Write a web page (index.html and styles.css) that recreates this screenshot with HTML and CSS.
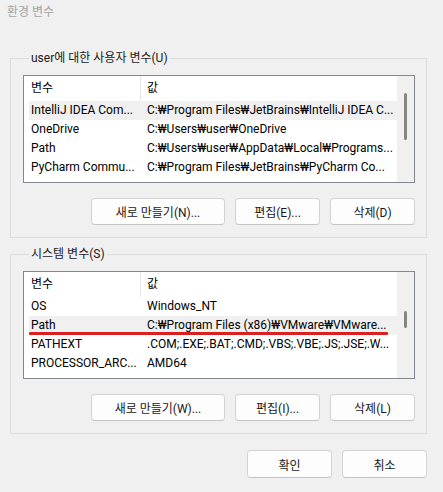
FILE: index.html
```html
<!DOCTYPE html>
<html lang="ko">
<head>
<meta charset="utf-8">
<title>환경 변수</title>
<link rel="stylesheet" href="styles.css">
</head>
<body>
<div class="title">환경 변수</div>

<fieldset class="group">
  <legend>user에 대한 사용자 변수(U)</legend>
  <div class="list">
    <div class="list-body">
      <div class="list-header">
        <span class="col name">변수</span>
        <span class="col value">값</span>
      </div>
      <div class="row selected">
        <span class="col name">IntelliJ IDEA Com...</span>
        <span class="col value">C:₩Program Files₩JetBrains₩IntelliJ IDEA C...</span>
      </div>
      <div class="row">
        <span class="col name">OneDrive</span>
        <span class="col value">C:₩Users₩user₩OneDrive</span>
      </div>
      <div class="row">
        <span class="col name">Path</span>
        <span class="col value">C:₩Users₩user₩AppData₩Local₩Programs...</span>
      </div>
      <div class="row">
        <span class="col name">PyCharm Commu...</span>
        <span class="col value">C:₩Program Files₩JetBrains₩PyCharm Co...</span>
      </div>
    </div>
    <div class="scrollbar"><div class="thumb thumb-user"></div></div>
  </div>
  <div class="buttons">
    <button class="btn wide">새로 만들기(N)...</button>
    <button class="btn">편집(E)...</button>
    <button class="btn">삭제(D)</button>
  </div>
</fieldset>

<fieldset class="group group-system">
  <legend>시스템 변수(S)</legend>
  <div class="list">
    <div class="list-body">
      <div class="list-header">
        <span class="col name">변수</span>
        <span class="col value">값</span>
      </div>
      <div class="row">
        <span class="col name">OS</span>
        <span class="col value">Windows_NT</span>
      </div>
      <div class="row selected marked">
        <span class="col name">Path</span>
        <span class="col value">C:₩Program Files (x86)₩VMware₩VMware...</span>
        <span class="mark"></span>
      </div>
      <div class="row">
        <span class="col name">PATHEXT</span>
        <span class="col value">.COM;.EXE;.BAT;.CMD;.VBS;.VBE;.JS;.JSE;.W...</span>
      </div>
      <div class="row">
        <span class="col name">PROCESSOR_ARC...</span>
        <span class="col value">AMD64</span>
      </div>
    </div>
    <div class="scrollbar"><div class="thumb thumb-system"></div></div>
  </div>
  <div class="buttons">
    <button class="btn wide">새로 만들기(W)...</button>
    <button class="btn">편집(I)...</button>
    <button class="btn">삭제(L)</button>
  </div>
</fieldset>

<div class="dialog-buttons">
  <button class="btn dlg">확인</button>
  <button class="btn dlg">취소</button>
</div>
</body>
</html>
```

FILE: styles.css
```css
* {
  box-sizing: border-box;
}

html,
body {
  margin: 0;
}

body {
  width: 443px;
  height: 492px;
  overflow: hidden;
  background: #f0f0f0;
  color: #000;
  font-family: Roboto, "Noto Sans CJK KR", sans-serif;
  font-size: 12px;
}

.title {
  height: 20px;
  padding: 4px 0 0 7px;
  line-height: 16px;
  color: #a3a3a3;
}

.group {
  width: 417px;
  min-width: 0;
  margin: 30px 0 0 10px;
  padding: 9px 0 12px 12px;
  border: 1px solid #dcdcdc;
}

.group-system {
  margin-top: 8px;
}

.group legend {
  margin-left: 6px;
  padding: 0 2px;
  line-height: 16px;
  color: #1a1a1a;
}

.list {
  display: flex;
  width: 392px;
  height: 108px;
  border: 1px solid #828790;
  background: #fff;
}

.list-body {
  flex: 1;
  min-width: 0;
  padding-left: 5px;
  overflow: hidden;
}

.list-header,
.row {
  display: flex;
}

.list-header {
  height: 25px;
  line-height: 24px;
}

.row {
  position: relative;
  height: 19px;
  line-height: 19px;
}

.row.selected {
  background: #f0f0f0;
}

.col {
  overflow: hidden;
  white-space: nowrap;
}

.col.name {
  flex: none;
  width: 112px;
  padding: 0 2px;
}

.list-header .col.name {
  border-right: 1px solid #e5e5e5;
}

.col.value {
  flex: 1;
  min-width: 0;
  padding: 0 0 0 6px;
}

.mark {
  position: absolute;
  left: 0;
  top: 16px;
  width: 359px;
  height: 3px;
  border-radius: 1px;
  background: #dc1f1f;
}

.scrollbar {
  flex: none;
  width: 17px;
  background: #f0f0f0;
}

.thumb {
  width: 3px;
  margin: 0 auto;
  border-radius: 2px;
  background: #868686;
}

.thumb-user {
  height: 47px;
  margin-top: 17px;
}

.thumb-system {
  height: 17px;
  margin-top: 39px;
}

.buttons {
  display: flex;
  justify-content: flex-end;
  gap: 10px;
  width: 392px;
  margin-top: 15px;
}

.btn {
  width: 85px;
  height: 27px;
  padding: 0;
  border: 1px solid #d3d3d3;
  border-bottom-color: #c4c4c4;
  border-radius: 4px;
  background: #fdfdfd;
  color: #1a1a1a;
  font: inherit;
}

.btn.wide {
  width: 134px;
}

.dialog-buttons {
  display: flex;
  justify-content: flex-end;
  gap: 10px;
  width: 417px;
  margin: 16px 0 0 10px;
}

.btn.dlg {
  height: 28px;
}
```
